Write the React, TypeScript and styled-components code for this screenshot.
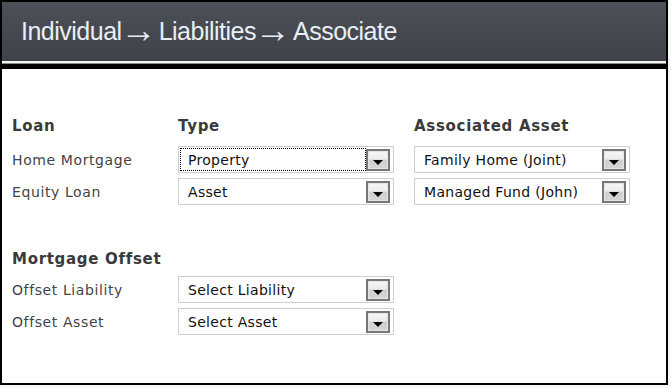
import * as React from "react";
import styled, { createGlobalStyle } from "styled-components";

const GlobalStyle = createGlobalStyle`
  body {
    margin: 0;
    background: #f7f7f7;
    font-family: "DejaVu Sans", Verdana, sans-serif;
  }
`;

const SPanel = styled.div`
  width: 668px;
  height: 385px;
  box-sizing: border-box;
  border: 2px solid #000;
  background: #fff;
  display: flex;
  flex-direction: column;
`;

const SHeader = styled.div`
  height: 59px;
  display: flex;
  align-items: center;
  padding-left: 19px;
  background: linear-gradient(#4c5057, #3f4248);
  color: #e8eef5;
  font-family: "Liberation Sans Narrow", "Liberation Sans", sans-serif;
  font-size: 25px;
  letter-spacing: -0.5px;
  white-space: nowrap;
`;

const SArrow = styled.span`
  font-size: 36px;
  line-height: 1;
  margin: -3px 2px 0 -1px;
  letter-spacing: 0;
`;

const SRule = styled.div`
  height: 8px;
  background: linear-gradient(
    #f2f2f2 0,
    #f2f2f2 2px,
    #8a8a8a 2px,
    #8a8a8a 3px,
    #000 3px,
    #000 8px
  );
`;

const SContent = styled.div`
  padding: 47px 0 0 10px;
  display: flex;
  flex-direction: column;
`;

const SSection = styled.div`
  display: grid;
  grid-template-columns: 146px 216px 216px;
  column-gap: 20px;
  row-gap: 5px;
  align-items: center;
  & + & {
    margin-top: 44px;
  }
`;

const SHeading = styled.div<{ $tight?: boolean }>`
  height: 20px;
  line-height: 20px;
  margin-bottom: ${(p) => (p.$tight ? "2px" : "5px")};
  font-weight: bold;
  font-size: 15px;
  letter-spacing: 0.7px;
  color: #3a3a3a;
  white-space: nowrap;
`;

const SLabel = styled.div`
  font-size: 14px;
  color: #444;
  letter-spacing: 0.6px;
  white-space: nowrap;
`;

const SSelect = styled.div`
  height: 27px;
  box-sizing: border-box;
  border: 1px solid #cfcfcf;
  background: #fff;
  display: flex;
  align-items: center;
  padding: 1px 3px 1px 1px;
`;

const SValue = styled.div<{ $focused?: boolean }>`
  flex: 1;
  align-self: stretch;
  display: flex;
  align-items: center;
  padding-left: 7px;
  font-size: 14px;
  letter-spacing: 0.3px;
  color: #111;
  white-space: nowrap;
  overflow: hidden;
  border: 1px dotted ${(p) => (p.$focused ? "#000" : "transparent")};
`;

const SButton = styled.div`
  width: 20px;
  height: 18px;
  border: 2px solid #777;
  background: linear-gradient(#f6f6f6 0%, #ececec 45%, #cfcfcf 50%, #d6d6d6 100%);
  display: flex;
  align-items: flex-end;
  justify-content: center;
  box-shadow: inset 0 0 0 1px #e6e6e6;
`;

const STriangle = styled.div`
  width: 0;
  height: 0;
  margin-bottom: 4px;
  border-left: 5px solid transparent;
  border-right: 5px solid transparent;
  border-top: 5px solid #000;
`;

const Select = ({ value, focused }: { value: string; focused?: boolean }) => (
  <SSelect>
    <SValue $focused={focused}>{value}</SValue>
    <SButton>
      <STriangle />
    </SButton>
  </SSelect>
);

const App = () => (
  <>
    <GlobalStyle />
    <SPanel>
      <SHeader>
        <span>Individual</span>
        <SArrow>→</SArrow>
        <span>Liabilities</span>
        <SArrow>→</SArrow>
        <span>Associate</span>
      </SHeader>
      <SRule />
      <SContent>
        <SSection>
          <SHeading>Loan</SHeading>
          <SHeading>Type</SHeading>
          <SHeading>Associated Asset</SHeading>
          <SLabel>Home Mortgage</SLabel>
          <Select value="Property" focused />
          <Select value="Family Home (Joint)" />
          <SLabel>Equity Loan</SLabel>
          <Select value="Asset" />
          <Select value="Managed Fund (John)" />
        </SSection>
        <SSection>
          <SHeading $tight>Mortgage Offset</SHeading>
          <div />
          <div />
          <SLabel>Offset Liability</SLabel>
          <Select value="Select Liability" />
          <div />
          <SLabel>Offset Asset</SLabel>
          <Select value="Select Asset" />
          <div />
        </SSection>
      </SContent>
    </SPanel>
  </>
);

export default App;
